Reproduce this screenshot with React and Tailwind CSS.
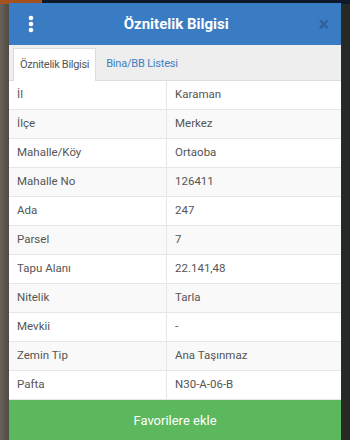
import React, { useState } from "react";

const rows = [
  ["İl", "Karaman"],
  ["İlçe", "Merkez"],
  ["Mahalle/Köy", "Ortaoba"],
  ["Mahalle No", "126411"],
  ["Ada", "247"],
  ["Parsel", "7"],
  ["Tapu Alanı", "22.141,48"],
  ["Nitelik", "Tarla"],
  ["Mevkii", "-"],
  ["Zemin Tip", "Ana Taşınmaz"],
  ["Pafta", "N30-A-06-B"],
];

export default function App() {
  const [tab, setTab] = useState(0);

  return (
    <div
      className="relative h-[440px] w-[350px] overflow-hidden bg-[linear-gradient(90deg,#6b625a_0%,#4a4640_3%,#2f322e_50%,#262a26_100%)] font-['Roboto','Liberation_Sans',sans-serif]"
    >
      {/* map edge at the top */}
      <div className="absolute left-0 top-0 h-[4px] w-[42px] bg-[#a5521f]" />
      <div className="absolute left-[42px] top-0 h-[4px] w-[308px] bg-[#0e1a2c]" />

      <div className="absolute left-[9px] top-[3px] flex w-[332px] flex-col">
        {/* header */}
        <div className="flex h-[42px] items-center bg-[#3a7cc3] pl-[18px] pr-[12px]">
          <svg width="6" height="18" viewBox="0 0 6 18" className="ml-[1px]">
            <circle cx="3" cy="3" r="2.3" fill="#ffffff" />
            <circle cx="3" cy="9" r="2.3" fill="#ffffff" />
            <circle cx="3" cy="15" r="2.3" fill="#ffffff" />
          </svg>
          <div className="flex-1 text-center text-[15px] font-bold text-white">
            Öznitelik Bilgisi
          </div>
          <span className="text-[20px] font-bold leading-none text-[#2f6199]">×</span>
        </div>

        {/* tabs */}
        <div className="flex h-[36px] items-end border-b border-[#dddddd] bg-[#eeeeee] pl-[4px]">
          <button
            onClick={() => setTab(0)}
            className={`h-[32px] px-[6px] text-[11px] tracking-[-0.3px] ${
              tab === 0
                ? "mb-[-1px] h-[33px] border border-b-0 border-[#dddddd] bg-white text-[#555555]"
                : "text-[#3f7fbf]"
            }`}
          >
            Öznitelik Bilgisi
          </button>
          <button
            onClick={() => setTab(1)}
            className={`h-[32px] px-[10px] text-[11px] tracking-[-0.2px] ${
              tab === 1
                ? "mb-[-1px] h-[33px] border border-b-0 border-[#dddddd] bg-white text-[#555555]"
                : "text-[#3f7fbf]"
            }`}
          >
            Bina/BB Listesi
          </button>
        </div>

        {/* table */}
        <div className="flex flex-col">
          {rows.map(([k, v], i) => (
            <div
              key={k}
              className={`grid h-[29px] grid-cols-[158px_1fr] border-b border-[#e6e6e6] text-[11.5px] text-[#555555] ${
                i % 2 === 1 ? "bg-[#f9f9f9]" : "bg-white"
              }`}
            >
              <div className="flex items-center border-r border-[#e6e6e6] pl-[8px]">{k}</div>
              <div className="flex items-center pl-[8px]">{v}</div>
            </div>
          ))}
        </div>

        {/* action */}
        <button className="flex h-[42px] items-center justify-center bg-[#5cb85c] text-[13px] text-white">
          Favorilere ekle
        </button>
      </div>
    </div>
  );
}
